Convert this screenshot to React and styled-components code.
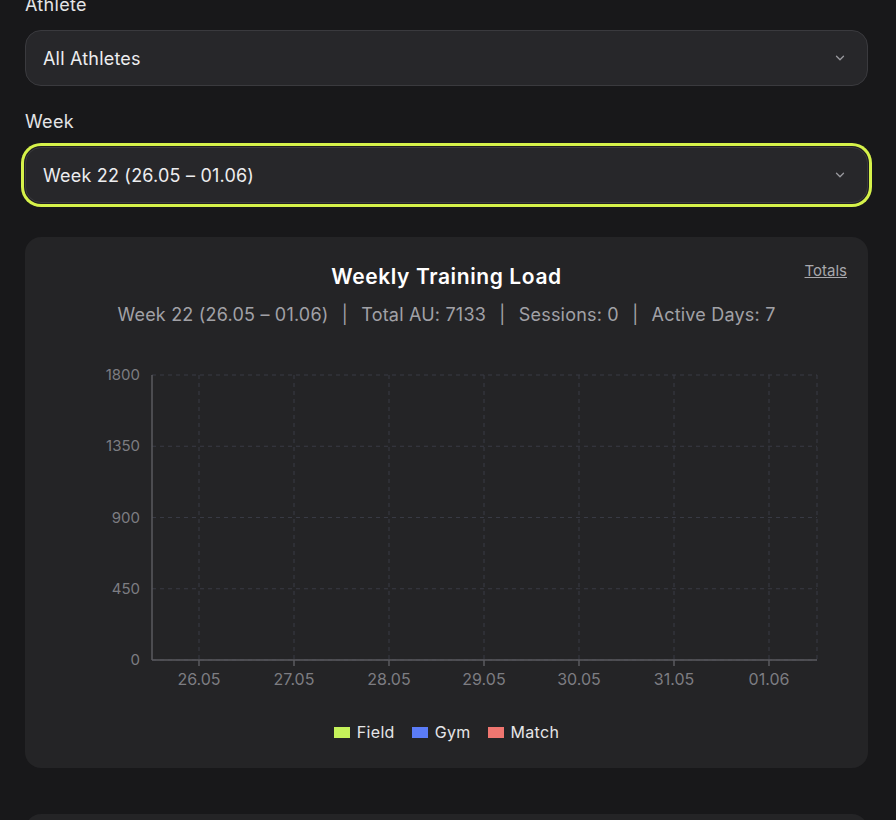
import React from 'react';
import styled, { createGlobalStyle } from 'styled-components';

const GlobalStyle = createGlobalStyle`
  body {
    margin: 0;
    background: #18181a;
    font-family: Inter, "Noto Sans", sans-serif;
    color: #ececee;
  }
`;

const days = ['26.05', '27.05', '28.05', '29.05', '30.05', '31.05', '01.06'];
const yTicks = [1800, 1350, 900, 450, 0];

const legend = [
  { label: 'Field', color: '#c5f25a' },
  { label: 'Gym', color: '#5b7cf7' },
  { label: 'Match', color: '#f07670' },
];

const Chevron = () => (
  <svg width="14" height="14" viewBox="0 0 24 24" fill="none" stroke="#9a9a9f" strokeWidth="2.2" strokeLinecap="round" strokeLinejoin="round">
    <path d="M6 9l6 6 6-6" />
  </svg>
);

const LoadChart = () => {
  const left = 127;
  const right = 792;
  const top = 15;
  const bottom = 300;
  const step = (bottom - top) / 4;
  return (
    <ChartSvg viewBox="0 0 843 340" width="843" height="340">
      {yTicks.map((t, i) => (
        <line key={'h' + t} x1={left} x2={right} y1={top + i * step} y2={top + i * step} stroke="#383a44" strokeDasharray="4 4" />
      ))}
      {days.map((d, i) => (
        <line key={'v' + d} x1={174 + i * 95} x2={174 + i * 95} y1={top} y2={bottom} stroke="#383a44" strokeDasharray="4 4" />
      ))}
      <line x1={right} x2={right} y1={top} y2={bottom} stroke="#383a44" strokeDasharray="4 4" />
      <line x1={left} x2={left} y1={top} y2={bottom} stroke="#5a5a5f" strokeWidth="1.5" />
      <line x1={left} x2={right} y1={bottom} y2={bottom} stroke="#5a5a5f" strokeWidth="1.5" />
      {yTicks.map((t, i) => (
        <text key={'yl' + t} x={115} y={top + i * step + 5} textAnchor="end" fill="#7d7d82" fontSize="15">{t}</text>
      ))}
      {days.map((d, i) => (
        <g key={'xl' + d}>
          <line x1={174 + i * 95} x2={174 + i * 95} y1={bottom} y2={bottom + 6} stroke="#5a5a5f" strokeWidth="1.5" />
          <text x={174 + i * 95} y={bottom + 25} textAnchor="middle" fill="#7d7d82" fontSize="16">{d}</text>
        </g>
      ))}
    </ChartSvg>
  );
};

const App = () => {
  return (
    <>
      <GlobalStyle />
      <Page>
        <Field>
          <Label>Athlete</Label>
          <Select>
            <span>All Athletes</span>
            <Chevron />
          </Select>
        </Field>
        <Field>
          <Label>Week</Label>
          <Select $focused>
            <span>Week 22 (26.05 – 01.06)</span>
            <Chevron />
          </Select>
        </Field>
        <Card>
          <CardHeader>
            <Title>Weekly Training Load</Title>
            <TotalsLink>Totals</TotalsLink>
          </CardHeader>
          <Summary>
            Week 22 (26.05 – 01.06) <Sep>|</Sep> Total AU: 7133 <Sep>|</Sep> Sessions: 0 <Sep>|</Sep> Active Days: 7
          </Summary>
          <LoadChart />
          <Legend>
            {legend.map((l) => (
              <LegendItem key={l.label}>
                <Swatch $color={l.color} />
                {l.label}
              </LegendItem>
            ))}
          </Legend>
        </Card>
        <NextCard />
      </Page>
    </>
  );
};

export default App;

const Page = styled.div`
  display: flex;
  flex-direction: column;
  padding: 0 28px 0 25px;
  margin-top: -6px;
`;

const Field = styled.div`
  display: flex;
  flex-direction: column;
  gap: 14px;
  margin-bottom: 25px;
  &:nth-of-type(2) {
    margin-bottom: 34px;
  }
`;

const Label = styled.div`
  font-size: 18px;
  line-height: 22px;
  color: #e4e4e6;
  letter-spacing: 0.3px;
`;

const Select = styled.div`
  height: 56px;
  box-sizing: border-box;
  display: flex;
  align-items: center;
  justify-content: space-between;
  padding: 0 20px 0 17px;
  background: #27272a;
  border: 1px solid #3a3a3e;
  border-radius: 16px;
  font-size: 18px;
  letter-spacing: 0.2px;
  color: #ededef;
  box-shadow: ${(p) => (p.$focused ? '0 0 0 1px #1f1f21, 0 0 0 4px #d6f24a' : 'none')};
`;

const Card = styled.div`
  background: #242426;
  border-radius: 16px;
  padding: 28px 21px 26px 0;
  display: flex;
  flex-direction: column;
  align-items: stretch;
  height: 531px;
  box-sizing: border-box;
`;

const CardHeader = styled.div`
  position: relative;
  display: flex;
  justify-content: center;
  padding-left: 21px;
`;

const Title = styled.div`
  font-size: 21px;
  font-weight: 600;
  line-height: 24px;
  letter-spacing: 0.6px;
  color: #ffffff;
`;

const TotalsLink = styled.a`
  position: absolute;
  right: 0;
  top: -4px;
  font-size: 15px;
  color: #a8a8ac;
  text-decoration: underline;
  cursor: pointer;
`;

const Summary = styled.div`
  margin-top: 15px;
  padding-left: 21px;
  text-align: center;
  font-size: 18px;
  line-height: 22px;
  letter-spacing: 0.2px;
  color: #a1a1a6;
`;

const Sep = styled.span`
  margin: 0 8px;
`;

const ChartSvg = styled.svg`
  display: block;
  margin-top: 34px;
  font-family: Inter, "Noto Sans", sans-serif;
`;

const Legend = styled.div`
  display: flex;
  justify-content: center;
  gap: 17px;
  margin-top: 22px;
  padding-left: 21px;
`;

const LegendItem = styled.div`
  display: flex;
  align-items: center;
  gap: 7px;
  font-size: 16px;
  letter-spacing: 0.3px;
  color: #e6e6e8;
`;

const Swatch = styled.span`
  width: 16px;
  height: 11px;
  background: ${(p) => p.$color};
`;

const NextCard = styled.div`
  margin-top: 46px;
  height: 120px;
  background: #242426;
  border-radius: 16px;
`;
